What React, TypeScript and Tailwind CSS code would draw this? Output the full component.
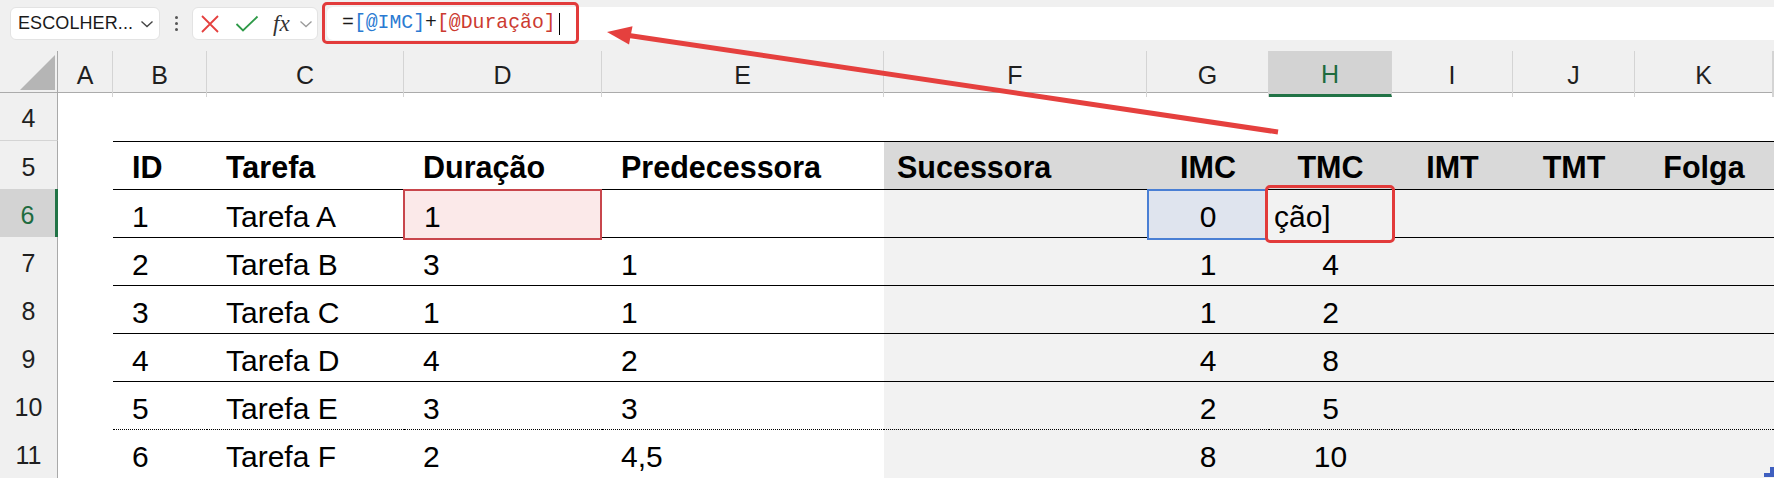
import React from "react";

const GRID =
  "grid grid-cols-[58px_55px_94px_197px_198px_282px_263px_122px_123px_121px_122px_138px_1fr]";

const letters = ["A", "B", "C", "D", "E", "F", "G", "H", "I", "J", "K", ""];

type Row = {
  n: number;
  id: string;
  t: string;
  d: string;
  p: string;
  imc: string;
  tmc: string;
};

const rows: Row[] = [
  { n: 6, id: "1", t: "Tarefa A", d: "1", p: "", imc: "0", tmc: "ção]" },
  { n: 7, id: "2", t: "Tarefa B", d: "3", p: "1", imc: "1", tmc: "4" },
  { n: 8, id: "3", t: "Tarefa C", d: "1", p: "1", imc: "1", tmc: "2" },
  { n: 9, id: "4", t: "Tarefa D", d: "4", p: "2", imc: "4", tmc: "8" },
  { n: 10, id: "5", t: "Tarefa E", d: "3", p: "3", imc: "2", tmc: "5" },
  { n: 11, id: "6", t: "Tarefa F", d: "2", p: "4,5", imc: "8", tmc: "10" },
];

function RowHeader({ n, selected }: { n: number; selected?: boolean }) {
  return (
    <div
      className={
        selected
          ? "h-full flex items-center justify-center pt-[4px] font-normal bg-[#d3d3d3] text-[#1e6b3f] border-r-[3px] border-r-[#217346] border-b border-b-[#d4d4d4] text-[25px]"
          : "h-full flex items-center justify-center pt-[4px] font-normal bg-[#f0f0f0] text-[#1f1f1f] border-r border-r-[#a9a9a9] border-b border-b-[#d4d4d4] text-[25px]"
      }
    >
      {n}
    </div>
  );
}

export default function App() {
  return (
    <div
      className="relative w-[1774px] h-[478px] overflow-hidden bg-white text-black"
      style={{ fontFamily: '"Liberation Sans", Arial, sans-serif' }}
    >
      {/* Toolbar */}
      <div className="h-[51px] bg-[#f0f0f0] flex items-start pt-[7px]">
        <div className="ml-[10px] w-[150px] h-[33px] bg-white rounded-[6px] border border-[#e3e3e3] flex items-center pl-[7px] pr-[4px]">
          <span className="text-[18px] text-[#1a1a1a] tracking-[0.1px]">ESCOLHER...</span>
          <svg width="14" height="10" viewBox="0 0 14 10" className="ml-auto mr-[1px]">
            <path d="M1.5 2.5 L7 7.5 L12.5 2.5" fill="none" stroke="#444" strokeWidth="1.4" />
          </svg>
        </div>
        <div className="w-[32px] h-[33px] flex flex-col items-center justify-center gap-[3px]">
          <div className="w-[3px] h-[3px] rounded-full bg-[#555]" />
          <div className="w-[3px] h-[3px] rounded-full bg-[#555]" />
          <div className="w-[3px] h-[3px] rounded-full bg-[#555]" />
        </div>
        <div className="w-[126px] h-[33px] bg-white rounded-[6px] border border-[#e3e3e3] flex items-center">
          <svg width="20" height="20" viewBox="0 0 20 20" className="ml-[7px]">
            <path d="M2 2 L18 18 M18 2 L2 18" stroke="#e5403e" strokeWidth="1.8" fill="none" />
          </svg>
          <svg width="24" height="18" viewBox="0 0 24 18" className="ml-[15px]">
            <path d="M1.5 9 L8 15.5 L22.5 1.5" stroke="#2e9a48" strokeWidth="1.8" fill="none" />
          </svg>
          <span
            className="ml-[14px] text-[23px] italic text-[#333] leading-none"
            style={{ fontFamily: '"Liberation Serif", "Times New Roman", serif' }}
          >
            fx
          </span>
          <svg width="14" height="10" viewBox="0 0 14 10" className="ml-[9px]">
            <path d="M1.5 2.5 L7 7.5 L12.5 2.5" fill="none" stroke="#9a9a9a" strokeWidth="1.3" />
          </svg>
        </div>
        <div className="relative ml-[9px] flex-1 h-[33px] bg-white rounded-l-[6px] flex items-center pl-[15px]">
          <span
            className="text-[19.8px] leading-none whitespace-pre"
            style={{ fontFamily: '"Liberation Mono", "Courier New", monospace' }}
          >
            <span className="text-[#1a1a1a]">=</span>
            <span className="text-[#2a7ad2]">[@IMC]</span>
            <span className="text-[#1a1a1a]">+</span>
            <span className="text-[#cc3a30]">[@Duração]</span>
          </span>
          <div className="ml-[3px] w-[1px] h-[22px] bg-black" />
          <div className="absolute left-[-5px] top-[-5px] w-[257px] h-[42px] border-[3px] border-[#e23b3b] rounded-[5px]" />
        </div>
      </div>

      {/* Column headers */}
      <div className={`${GRID} h-[42px] bg-[#f0f0f0] border-b border-b-[#ababab]`}>
        <div className="relative border-r border-r-[#a9a9a9]">
          <svg width="58" height="42" className="absolute left-0 top-0">
            <polygon points="55,4 20,39 55,39" fill="#b5b5b5" />
          </svg>
        </div>
        {letters.map((l, i) =>
          l === "H" ? (
            <div
              key={i}
              className="flex items-center justify-center pt-[5px] bg-[#d3d3d3] text-[#1e6b3f] border-r border-r-[#d4d4d4] border-b-[3px] border-b-[#217346] text-[25px]"
            >
              {l}
            </div>
          ) : (
            <div
              key={i}
              className="flex items-center justify-center pt-[3px] text-[#1f1f1f] border-r border-r-[#d4d4d4] text-[25px]"
            >
              {l}
            </div>
          )
        )}
      </div>

      {/* Row 4 */}
      <div className={`${GRID} h-[48px]`}>
        <RowHeader n={4} />
        <div className="col-span-12" />
      </div>

      {/* Row 5 - table header */}
      <div className={`${GRID} h-[48px] text-[30.5px] font-bold`}>
        <RowHeader n={5} />
        <div />
        <div className="border-t border-black flex items-center pt-[3px] pl-[19px]">ID</div>
        <div className="border-t border-black flex items-center pt-[3px] pl-[19px]">Tarefa</div>
        <div className="border-t border-black flex items-center pt-[3px] pl-[19px]">Duração</div>
        <div className="border-t border-black flex items-center pt-[3px] pl-[19px]">Predecessora</div>
        <div className="border-t border-black bg-[#d9d9d9] flex items-center pt-[3px] pl-[13px]">Sucessora</div>
        <div className="border-t border-black bg-[#d9d9d9] flex items-center pt-[3px] justify-center">IMC</div>
        <div className="border-t border-black bg-[#d9d9d9] flex items-center pt-[3px] justify-center">TMC</div>
        <div className="border-t border-black bg-[#d9d9d9] flex items-center pt-[3px] justify-center">IMT</div>
        <div className="border-t border-black bg-[#d9d9d9] flex items-center pt-[3px] justify-center">TMT</div>
        <div className="border-t border-black bg-[#d9d9d9] flex items-center pt-[3px] justify-center">Folga</div>
        <div className="border-t border-black bg-[#d9d9d9]" />
      </div>

      {/* Data rows */}
      {rows.map((r, idx) => {
        const last = idx === rows.length - 1;
        const first = idx === 0;
        const b = last
          ? "border-t border-black border-b border-dotted border-b-[#c4c4c4]"
          : "border-t border-black";
        return (
          <div key={r.n} className={`${GRID} h-[48px] text-[30px]`}>
            <RowHeader n={r.n} selected={first} />
            <div />
            <div className={`${b} flex items-center pt-[4px] pl-[19px]`}>{r.id}</div>
            <div className={`${b} flex items-center pt-[4px] pl-[19px]`}>{r.t}</div>
            {first ? (
              <div className={`${b} relative flex items-center pt-[4px]`}>
                <div className="absolute left-[-1px] top-[-1px] right-0 bottom-[-1px] bg-[#fbe9e9] border-2 border-[#c8464c]" />
                <span className="relative pl-[20px]">{r.d}</span>
              </div>
            ) : (
              <div className={`${b} flex items-center pt-[4px] pl-[19px]`}>{r.d}</div>
            )}
            <div className={`${b} flex items-center pt-[4px] pl-[19px]`}>{r.p}</div>
            <div className={`${b} bg-[#f2f2f2]`} />
            {first ? (
              <div className={`${b} relative bg-[#f2f2f2] flex items-center justify-center pt-[4px]`}>
                <div className="absolute left-0 top-[-1px] right-[2px] bottom-[-1px] bg-[#dfe4ee] border-2 border-[#4a7fd4]" />
                <span className="relative">{r.imc}</span>
              </div>
            ) : (
              <div className={`${b} bg-[#f2f2f2] flex items-center justify-center pt-[4px]`}>{r.imc}</div>
            )}
            {first ? (
              <div className={`${b} relative bg-[#f2f2f2] flex items-center pt-[4px] pl-[5px]`}>
                <span className="relative">{r.tmc}</span>
                <div className="absolute left-[-4px] top-[-5px] right-[-3px] bottom-[-4px] border-[3px] border-[#e23b3b] rounded-[5px]" />
              </div>
            ) : (
              <div className={`${b} bg-[#f2f2f2] flex items-center justify-center pt-[4px]`}>{r.tmc}</div>
            )}
            <div className={`${b} bg-[#f2f2f2]`} />
            <div className={`${b} bg-[#f2f2f2]`} />
            <div className={`${b} bg-[#f2f2f2]`} />
            <div className={`${b} bg-[#f2f2f2]`} />
          </div>
        );
      })}

      {/* Table resize handle */}
      <svg width="10" height="10" viewBox="0 0 10 10" className="absolute left-[1764px] top-[467px]">
        <path d="M6 0 H10 V10 H0 V6 H6 Z" fill="#3f5fbf" />
      </svg>

      {/* Red arrow overlay */}
      <svg
        width="1774"
        height="478"
        viewBox="0 0 1774 478"
        className="absolute left-0 top-0 pointer-events-none"
      >
        <line x1="1278" y1="132" x2="629" y2="35.5" stroke="#e5403e" strokeWidth="5" strokeLinecap="butt" />
        <polygon points="607,32 632.5,26.3 629,44.5" fill="#e5403e" />
      </svg>
    </div>
  );
}
